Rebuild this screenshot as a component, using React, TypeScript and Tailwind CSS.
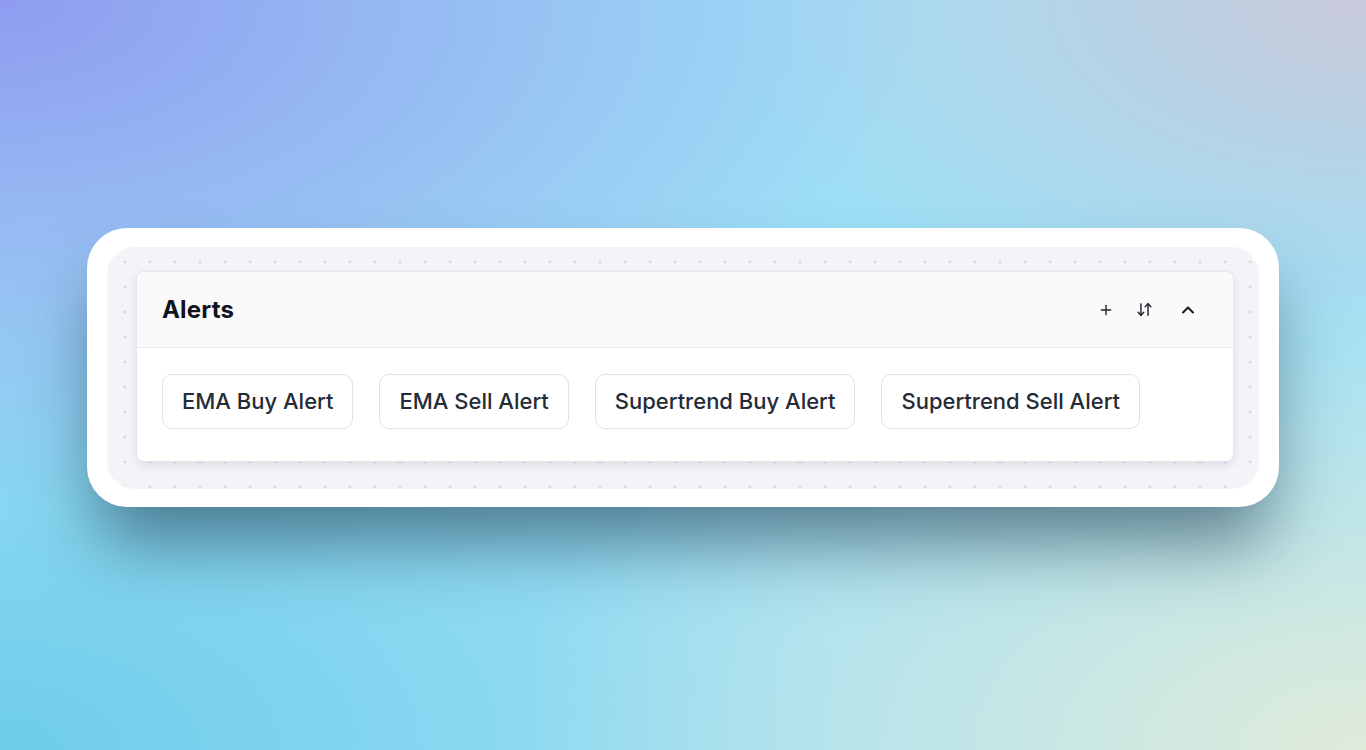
import React from "react";
import { Plus, ArrowDownUp, ChevronUp } from "lucide-react";

const alerts = ["EMA Buy Alert", "EMA Sell Alert", "Supertrend Buy Alert", "Supertrend Sell Alert"];

export default function App() {
  return (
    <div
      className="h-[750px] w-full overflow-hidden flex flex-col items-center pt-[228px] bg-[#9ee0f6] bg-[radial-gradient(ellipse_at_top_left,#8f9cf0_0%,transparent_48%),radial-gradient(ellipse_at_top_right,#c9cadb_0%,transparent_33%),radial-gradient(ellipse_at_bottom_right,#e0ebda_0%,transparent_45%),radial-gradient(ellipse_at_bottom_left,#6ecdea_0%,transparent_45%)]"
      style={{ fontFamily: "Inter, 'Noto Sans', sans-serif" }}
    >
      <div className="w-[1192px] h-[279px] rounded-[40px] bg-white pt-[19px] pb-[18px] px-[20px] shadow-[0_45px_70px_-10px_rgba(30,60,80,0.6)]">
        <div className="h-full rounded-[28px] bg-[#f3f4f8] bg-[radial-gradient(circle,#cdd1da_1px,transparent_1.3px)] bg-[size:25px_25px] bg-[position:5.5px_2.5px] pt-[24px] pl-[29px] pr-[25px] pb-[26px]">
          <div className="rounded-[8px] border border-[#e4e6eb] bg-white shadow-[0_3px_8px_rgba(20,30,50,0.10)] overflow-hidden">
            <div className="h-[76px] bg-[#fafafa] border-b border-[#e6e8ec] flex items-center justify-between pl-[25px] pr-[35px]">
              <h2 className="text-[24px] font-bold text-[#0f1421] tracking-[0.2px]">Alerts</h2>
              <div className="flex items-center text-[#1b1f27]">
                <Plus size={16} strokeWidth={2} />
                <ArrowDownUp size={17} strokeWidth={2} className="ml-[22px]" />
                <ChevronUp size={20} strokeWidth={2.5} className="ml-[25px]" />
              </div>
            </div>
            <div className="flex gap-[26px] pl-[25px] pt-[26px] pb-[32px]">
              {alerts.map((a) => (
                <button
                  key={a}
                  className="h-[55px] px-[19px] rounded-[10px] border border-[#dce2ea] bg-white text-[22px] font-medium text-[#252b37]"
                >
                  {a}
                </button>
              ))}
            </div>
          </div>
        </div>
      </div>
    </div>
  );
}
